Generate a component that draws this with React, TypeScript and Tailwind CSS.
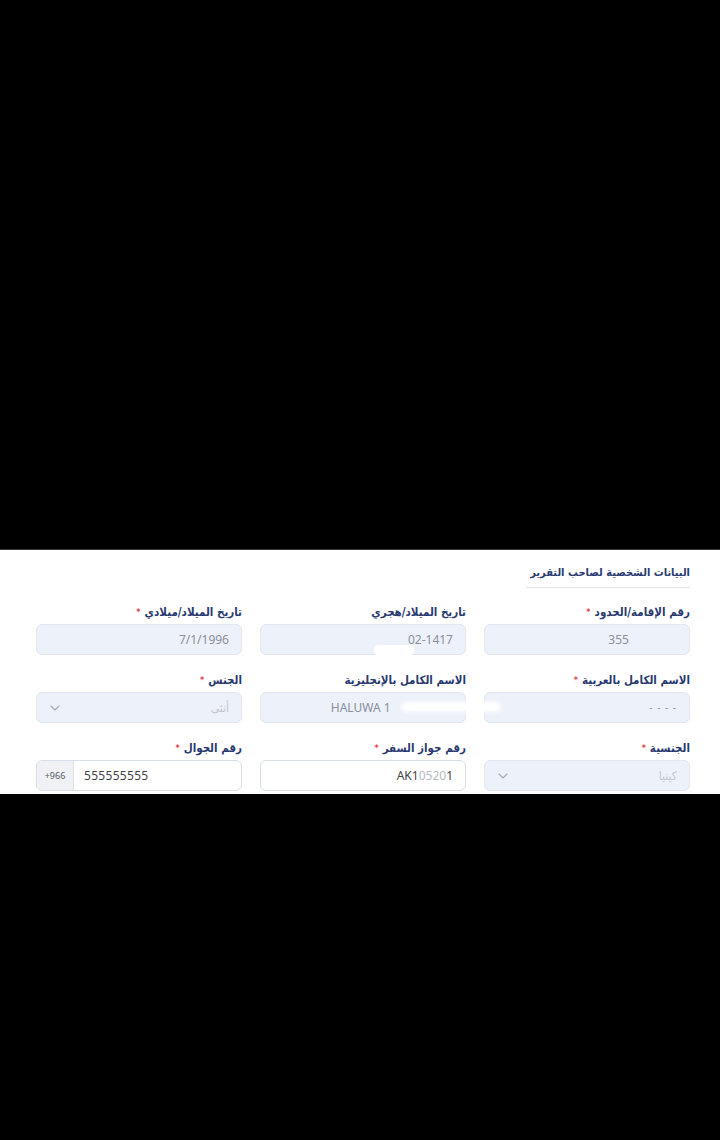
import { ChevronDown } from "lucide-react";

const font = { fontFamily: '"Noto Sans", "DejaVu Sans Condensed", "DejaVu Sans", sans-serif' };
const arabic = { fontFamily: '"DejaVu Sans Condensed", "DejaVu Sans", sans-serif' };

function Label({ text, required }: { text: string; required?: boolean }) {
  return (
    <div className="flex items-center gap-1 h-4 text-[11.5px] font-bold text-[#2a3a70] leading-4" style={arabic}>
      <span>{text}</span>
      {required && <span className="text-[9px] text-[#e5484d] leading-none">*</span>}
    </div>
  );
}

function Field({ label, required, children }: { label: string; required?: boolean; children: React.ReactNode }) {
  return (
    <div className="flex flex-col gap-1">
      <Label text={label} required={required} />
      {children}
    </div>
  );
}

function ReadOnly({ children }: { children: React.ReactNode }) {
  return (
    <div className="relative h-[31px] rounded-md bg-[#edf1f9] border border-[#e1e6f0] flex items-center px-3 text-[12px] text-[#8a8f99]">
      {children}
    </div>
  );
}

function SelectBox({ value }: { value: string }) {
  return (
    <div className="h-[31px] rounded-md bg-[#edf1f9] border border-[#e1e6f0] flex items-center justify-between pr-3 pl-[10px] text-[12px] text-[#c3c7cf]">
      <span style={arabic}>{value}</span>
      <ChevronDown size={16} strokeWidth={1.6} className="text-[#a3a8b3]" />
    </div>
  );
}

export default function App() {
  return (
    <div className="w-[720px] h-[1140px] bg-black flex flex-col" style={font}>
      <div className="h-[550px] border-b border-[#3a3a3a]" />
      <div dir="rtl" className="bg-white pt-[15px] pb-[3px] pr-[30px] pl-[36px]">
        <div className="flex">
          <div
            className="pb-[6px] pl-1 border-b border-[#e3e6ec] text-[11px] font-bold text-[#2a3a70] leading-4"
            style={arabic}
          >
            البيانات الشخصية لصاحب التقرير
          </div>
        </div>
        <div className="grid grid-cols-3 gap-x-[18px] gap-y-[17px] mt-[16px]">
          <Field label="رقم الإقامة/الحدود" required>
            <ReadOnly>
              <span dir="ltr">
                355<span className="text-transparent">1234567</span>
              </span>
            </ReadOnly>
          </Field>
          <Field label="تاريخ الميلاد/هجري">
            <ReadOnly>
              <span dir="ltr">02-1417</span>
              <span className="absolute left-[113px] top-[20px] w-[40px] h-[10px] bg-white rounded-sm" />
            </ReadOnly>
          </Field>
          <Field label="تاريخ الميلاد/ميلادي" required>
            <ReadOnly>
              <span dir="ltr">7/1/1996</span>
            </ReadOnly>
          </Field>

          <Field label="الاسم الكامل بالعربية" required>
            <ReadOnly>
              <span className="text-[10px] tracking-[1px]">- - - -</span>
            </ReadOnly>
          </Field>
          <Field label="الاسم الكامل بالإنجليزية">
            <ReadOnly>
              <span dir="ltr">
                HALUWA 1<span className="text-transparent">ABCDEFGH</span>
              </span>
              <span className="absolute left-[140px] top-[9px] w-[100px] h-[10px] bg-white rounded-full blur-[2px]" />
            </ReadOnly>
          </Field>
          <Field label="الجنس" required>
            <SelectBox value="أنثى" />
          </Field>

          <Field label="الجنسية" required>
            <SelectBox value="كينيا" />
          </Field>
          <Field label="رقم جواز السفر" required>
            <div className="h-[31px] rounded-md bg-white border border-[#d9dee7] flex items-center px-3 text-[12px] text-[#3f434a]">
              <span dir="ltr">
                AK1<span className="text-[#b5b9c0]">0520</span>1
              </span>
            </div>
          </Field>
          <Field label="رقم الجوال" required>
            <div dir="ltr" className="h-[31px] rounded-md bg-white border border-[#d9dee7] flex items-stretch overflow-hidden">
              <div className="w-[37px] bg-[#eff1f5] border-r border-[#dde1e8] flex items-center justify-center text-[9px] text-[#555a63]">
                +966
              </div>
              <div className="flex items-center pl-[10px] text-[12px] text-[#3f434a] tracking-[0.3px]">555555555</div>
            </div>
          </Field>
        </div>
      </div>
      <div className="flex-1 bg-black" />
    </div>
  );
}
